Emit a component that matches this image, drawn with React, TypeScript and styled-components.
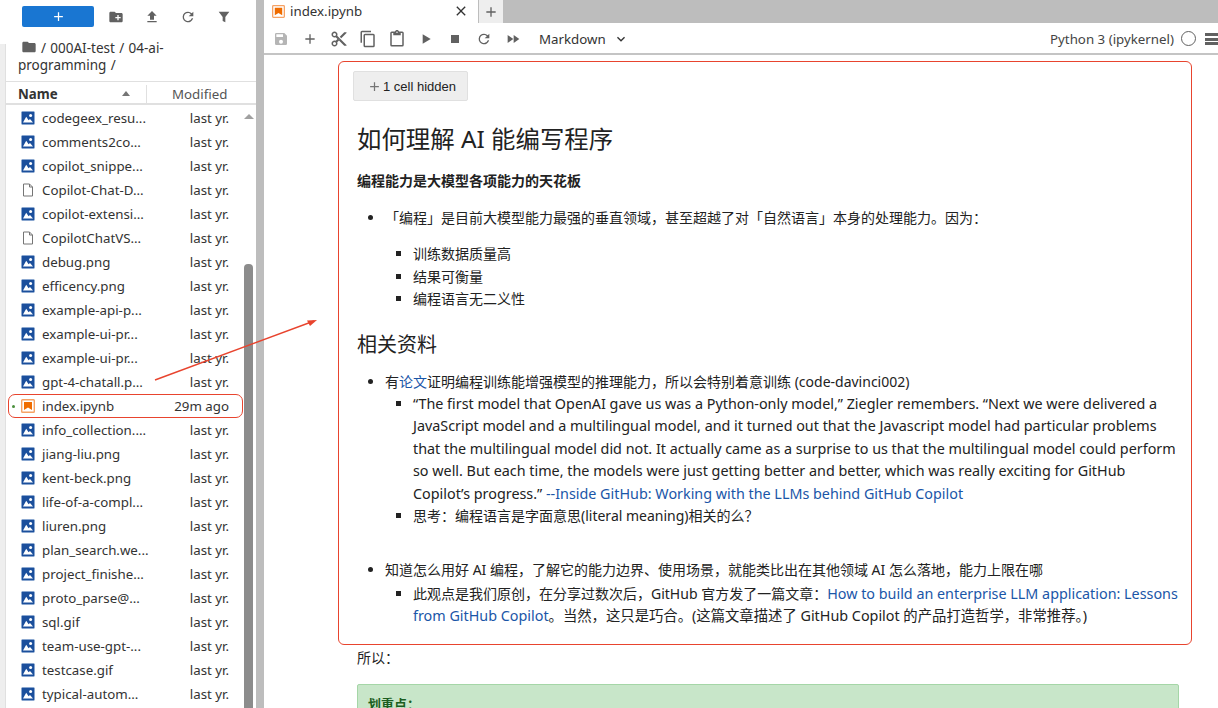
import React from "react";
import styled, { createGlobalStyle } from "styled-components";

const Global = createGlobalStyle`
  html, body { margin: 0; padding: 0; height: 708px; overflow: hidden; background: #fff; }
  #root { height: 708px; }
  * { box-sizing: border-box; }
`;
const FONT = `"Noto Sans", "Noto Sans CJK SC", sans-serif`;

const Page = styled.div`
  position: relative; display: flex; width: 1218px; height: 708px; overflow: hidden;
  font-family: ${FONT}; color: #2a2a2a; background: #fff;
`;
const Sidebar = styled.aside`
  width: 256px; flex: none; display: flex; flex-direction: column; height: 708px;
`;
const SideToolbar = styled.div`
  height: 39px; flex: none; display: flex; align-items: flex-start; padding: 6px 0 0 22px;
`;
const NewButton = styled.div`
  width: 72px; height: 21px; border-radius: 2px; background: #1976d2; display: flex;
  align-items: center; justify-content: center; color: #fff; margin-right: 4px;
`;
const SideTool = styled.div`
  width: 36px; height: 21px; display: flex; align-items: center; justify-content: center; color: #616161;
`;
const SideBody = styled.div`flex: 1; display: flex; min-height: 0;`;
const Strip = styled.div`width: 6px; flex: none; margin-top: 5px; background: #eee; border-right: 1px solid #e0e0e0;`;
const Panel = styled.div`flex: 1; min-width: 0; display: flex; flex-direction: column;`;
const Crumbs = styled.div`
  height: 42px; flex: none; padding: 0 0 0 12px; font-size: 13.5px; line-height: 17px; color: #333; word-spacing: 0.8px;
  svg { vertical-align: -2px; margin: 0 4px 0 3px; color: #616161; }
`;
const Header = styled.div`
  height: 24px; flex: none; display: flex; align-items: center; padding-top: 2px; border-top: 1px solid #e0e0e0;
  border-bottom: 2px solid #e0e0e0; font-size: 13.3px; color: #333;
`;
const NameHead = styled.div`
  width: 141px; flex: none; display: flex; align-items: center; justify-content: space-between;
  padding: 0 16px 0 12px; font-weight: 700; height: 18px; border-right: 1px solid #e0e0e0; color: #333;
`;
const SortUp = styled.span`
  width: 0; height: 0; border-left: 4.5px solid transparent; border-right: 4.5px solid transparent;
  border-bottom: 5px solid #757575;
`;
const ModHead = styled.div`flex: 1; padding-left: 25px; color: #555;`;
const ListArea = styled.div`flex: 1; display: flex; min-height: 0; padding-top: 1px;`;
const Rows = styled.div`width: 237px; flex: none; display: flex; flex-direction: column;`;
const Row = styled.div`
  position: relative; height: 24px; flex: none; display: flex; align-items: center;
  padding: 0 14px 0 15px; font-size: 13.3px; color: #333;
`;
const FileIcon = styled.svg`width: 14px; height: 14px; flex: none; margin-right: 7px;`;
const TabIcon = styled(FileIcon)`width: 13px; height: 13px; margin-right: 5px;`;
const FileName = styled.span`flex: 1; min-width: 0; white-space: nowrap;`;
const FileDate = styled.span`flex: none; white-space: nowrap;`;
const Ring = styled.div`
  position: absolute; left: 2px; right: 0; top: 0; height: 24px;
  border: 1px solid #e8442e; border-radius: 7px; pointer-events: none;
`;
const Dot = styled.span`
  position: absolute; left: 6px; top: 11px; width: 3px; height: 3px; border-radius: 50%; background: #4a8f3c;
`;
const Scroll = styled.div`flex: 1; position: relative; display: flex; flex-direction: column; align-items: center; padding-right: 2px;`;
const ScrollArrow = styled.span`
  width: 0; height: 0; margin-top: 8px; border-left: 5px solid transparent; border-right: 5px solid transparent;
  border-bottom: 5px solid #a0a0a0;
`;
const Thumb = styled.div`width: 9px; flex: 1; margin-top: 145px; background: #8c8c8c; border-radius: 4px 4px 0 0;`;
const Divider = styled.div`width: 8px; flex: none; background: #bdbdbd; height: 708px;`;

const Main = styled.main`flex: 1; min-width: 0; display: flex; flex-direction: column; height: 708px;`;
const TabBar = styled.div`height: 23px; flex: none; display: flex; background: #bdbdbd;`;
const Tab = styled.div`
  width: 214px; flex: none; background: #fff; display: flex; align-items: center; padding: 0 9px 1px 8px;
  font-size: 13.3px; color: #333;
  span { flex: 1; }
`;
const AddTab = styled.div`
  width: 25px; flex: none; background: #eee; border-left: 1px solid #bdbdbd; display: flex; align-items: center; justify-content: center; color: #616161;
`;
const Toolbar = styled.div`
  height: 32px; flex: none; display: flex; align-items: center; border-bottom: 2px solid #c4c4c4; padding: 1px 0 0 2px; color: #616161;
`;
const Tool = styled.div`
  width: 29px; height: 24px; flex: none; display: flex; align-items: center; justify-content: center;
  color: ${(p: { $muted?: boolean }) => (p.$muted ? "#b5b5b5" : "#616161")};
`;
const CellType = styled.div`
  display: flex; align-items: center; margin-left: 12px; font-size: 13.3px; color: #333; width: 90px; justify-content: space-between;
`;
const Spacer = styled.div`flex: 1;`;
const Kernel = styled.div`font-size: 13.3px; color: #444; white-space: nowrap; margin-right: 7px;`;
const KernelState = styled.span`
  width: 15px; height: 15px; border: 1.5px solid #616161; border-radius: 50%; flex: none; margin-right: 9px;
`;
const Menu = styled.span`
  width: 13px; height: 12px; flex: none;
  background: repeating-linear-gradient(#616161 0 3px, transparent 3px 4.5px);
`;
const Notebook = styled.div`flex: 1; min-height: 0; overflow: hidden; padding: 6px 26px 0 74px;`;
const RedBox = styled.section`
  height: 584px; border: 1px solid #e8442e; border-radius: 6px; padding: 9px 12px 0 18px;
`;
const Hidden = styled.div`
  width: 115px; height: 30px; margin-left: -4px; padding-left: 2px; background: #eee; border: 1px solid #e0e0e0; border-radius: 2px;
  display: flex; align-items: center; justify-content: center; gap: 1px; font-family: "Liberation Sans", "Noto Sans CJK SC", sans-serif;
  font-size: 13px; color: #222; svg { color: #757575; }
`;
const H1 = styled.h1`
  margin: 21px 0 0; font-size: 24.4px; line-height: 34px; font-weight: 400; color: #222;
`;
const Strong = styled.p`margin: 15px 0 0; font-size: 14px; line-height: 20px; font-weight: 700; color: #222;`;
const Outer = styled.ul`margin: 0; padding-left: 28px; font-size: 14px; color: #222;`;
const Inner = styled.ul`margin: 0; padding-left: 28px; list-style: square;`;
const Li = styled.li`line-height: 22.4px;`;
const H2 = styled.h2`margin: 19px 0 0; font-size: 20px; line-height: 30px; font-weight: 400; color: #222;`;
const Prose = styled.span`font-size: 14.35px; white-space: nowrap;`;
const A = styled.a`color: #1a56a8; text-decoration: none;`;
const After = styled.p`margin: 2px 0 0 19px; font-size: 14px; line-height: 22px; color: #222;`;
const Note = styled.div`
  margin: 15px 13px 0 19px; height: 80px; background: #c8e6c9; border: 1px solid #a5d6a7; border-radius: 2px;
  padding: 9px 10px; font-size: 13px; font-weight: 700; color: #1b5e20;
`;
const Overlay = styled.svg`position: absolute; left: 0; top: 0; width: 1218px; height: 708px; pointer-events: none;`;

const ImageIcon = () => (
  <FileIcon viewBox="0 0 14 14">
    <rect x="0.5" y="0.5" width="13" height="13" rx="1" fill="#1b4f9c" stroke="#8aa7d2" strokeWidth="0.6" />
    <circle cx="9.6" cy="4.6" r="1.5" fill="#fff" />
    <path d="M2 11.500 5.200 5.800 7.600 9.200 9 8l3 3.500z" fill="#fff" />
  </FileIcon>
);
const notebookArt = (
  <>
    <rect x="0.7" y="0.7" width="12.6" height="12.6" rx="0.8" fill="#fff" stroke="#f6a265" strokeWidth="1.4" />
    <path d="M3 3h8v8L7 8.600 3 11z" fill="#ef6c00" />
  </>
);
const NotebookIcon = () => <FileIcon viewBox="0 0 14 14">{notebookArt}</FileIcon>;
const DocIcon = () => (
  <FileIcon viewBox="0 0 14 14">
    <path d="M2.500 1h6L11.500 4v9h-9z M8.500 1v3h3" fill="none" stroke="#757575" strokeWidth="1" />
  </FileIcon>
);
const Ico = ({ d, size = 16 }: { d: string; size?: number }) => (
  <svg width={size} height={size} viewBox="0 0 24 24" fill="currentColor"><path d={d} /></svg>
);
const P = {
  plus: "M19 13h-6v6h-2v-6H5v-2h6V5h2v6h6z",
  folderPlus: "M20 6h-8l-2-2H4c-1.100 0-2 .9-2 2v12c0 1.100.9 2 2 2h16c1.100 0 2-.9 2-2V8c0-1.100-.9-2-2-2zm-1 8h-3v3h-2v-3h-3v-2h3V9h2v3h3v2z",
  upload: "M5 20h14v-2H5v2zm0-10h4v6h6v-6h4l-7-7-7 7z",
  refresh: "M17.650 6.350A7.950 7.950 0 0 0 12 4a8 8 0 1 0 7.730 10h-2.080A6 6 0 1 1 12 6c1.660 0 3.140.69 4.220 1.780L13 11h7V4l-2.350 2.350z",
  filter: "M4 4h16l-6 8v8l-4-2v-6z",
  folder: "M10 4H4c-1.100 0-2 .9-2 2v12c0 1.100.9 2 2 2h16c1.100 0 2-.9 2-2V8c0-1.100-.9-2-2-2h-8l-2-2z",
  save: "M17 3H5a2 2 0 0 0-2 2v14a2 2 0 0 0 2 2h14a2 2 0 0 0 2-2V7l-4-4zm-5 16a3 3 0 1 1 0-6 3 3 0 0 1 0 6zm3-10H5V5h10v4z",
  cut: "M9.640 7.640c.23-.5.36-1.050.36-1.640 0-2.210-1.790-4-4-4S2 3.790 2 6s1.790 4 4 4c.59 0 1.140-.13 1.640-.36L10 12l-2.360 2.360C7.140 14.130 6.590 14 6 14c-2.210 0-4 1.790-4 4s1.790 4 4 4 4-1.790 4-4c0-.59-.13-1.140-.36-1.640L12 14l7 7h3v-1L9.640 7.640zM6 8a2 2 0 1 1 0-4 2 2 0 0 1 0 4zm0 12a2 2 0 1 1 0-4 2 2 0 0 1 0 4zm6-7.500a.5.5 0 1 1 0-1 .5.5 0 0 1 0 1zM19 3l-6 6 2 2 7-7V3z",
  copy: "M16 1H4a2 2 0 0 0-2 2v14h2V3h12V1zm3 4H8a2 2 0 0 0-2 2v14a2 2 0 0 0 2 2h11a2 2 0 0 0 2-2V7a2 2 0 0 0-2-2zm0 16H8V7h11v14z",
  paste: "M19 2h-4.180C14.400.84 13.300 0 12 0S9.600.84 9.180 2H5a2 2 0 0 0-2 2v16a2 2 0 0 0 2 2h14a2 2 0 0 0 2-2V4a2 2 0 0 0-2-2zm-7 0a1 1 0 1 1 0 2 1 1 0 0 1 0-2zm7 18H5V4h2v3h10V4h2v16z",
  run: "M7 5v14l12-7z",
  stop: "M6 6h12v12H6z",
  ff: "M4 18l8.500-6L4 6v12zm9-12v12l8.500-6L13 6z",
  chevron: "M7.410 8.590 12 13.170l4.590-4.580L18 10l-6 6-6-6z",
  close: "M19 6.410 17.590 5 12 10.590 6.410 5 5 6.410 10.590 12 5 17.590 6.410 19 12 13.410 17.590 19 19 17.590 13.410 12z",
};

const files: [string, string, "img" | "doc" | "nb"][] = [
  ["codegeex_resu...", "last yr.", "img"],
  ["comments2co...", "last yr.", "img"],
  ["copilot_snippe...", "last yr.", "img"],
  ["Copilot-Chat-D...", "last yr.", "doc"],
  ["copilot-extensi...", "last yr.", "img"],
  ["CopilotChatVS...", "last yr.", "doc"],
  ["debug.png", "last yr.", "img"],
  ["efficency.png", "last yr.", "img"],
  ["example-api-p...", "last yr.", "img"],
  ["example-ui-pr...", "last yr.", "img"],
  ["example-ui-pr...", "last yr.", "img"],
  ["gpt-4-chatall.p...", "last yr.", "img"],
  ["index.ipynb", "29m ago", "nb"],
  ["info_collection....", "last yr.", "img"],
  ["jiang-liu.png", "last yr.", "img"],
  ["kent-beck.png", "last yr.", "img"],
  ["life-of-a-compl...", "last yr.", "img"],
  ["liuren.png", "last yr.", "img"],
  ["plan_search.we...", "last yr.", "img"],
  ["project_finishe...", "last yr.", "img"],
  ["proto_parse@...", "last yr.", "img"],
  ["sql.gif", "last yr.", "img"],
  ["team-use-gpt-...", "last yr.", "img"],
  ["testcase.gif", "last yr.", "img"],
  ["typical-autom...", "last yr.", "img"],
];

export default function App() {
  return (
    <Page>
      <Global />
      <Sidebar>
        <SideToolbar>
          <NewButton><Ico d={P.plus} size={15} /></NewButton>
          <SideTool><Ico d={P.folderPlus} /></SideTool>
          <SideTool><Ico d={P.upload} /></SideTool>
          <SideTool><Ico d={P.refresh} /></SideTool>
          <SideTool><Ico d={P.filter} /></SideTool>
        </SideToolbar>
        <SideBody>
          <Strip />
          <Panel>
            <Crumbs>
              <Ico d={P.folder} size={16} />/ 000AI-test / 04-ai-<br />programming /
            </Crumbs>
            <Header>
              <NameHead>Name<SortUp /></NameHead>
              <ModHead>Modified</ModHead>
            </Header>
            <ListArea>
              <Rows>
                {files.map(([name, date, kind], i) => (
                  <Row key={i}>
                    {kind === "nb" && <Ring />}
                    {kind === "nb" && <Dot />}
                    {kind === "img" ? <ImageIcon /> : kind === "doc" ? <DocIcon /> : <NotebookIcon />}
                    <FileName>{name}</FileName>
                    <FileDate>{date}</FileDate>
                  </Row>
                ))}
              </Rows>
              <Scroll>
                <ScrollArrow />
                <Thumb />
              </Scroll>
            </ListArea>
          </Panel>
        </SideBody>
      </Sidebar>
      <Divider />
      <Main>
        <TabBar>
          <Tab>
            <TabIcon viewBox="0 0 14 14">{notebookArt}</TabIcon>
            <span>index.ipynb</span>
            <Ico d={P.close} size={16} />
          </Tab>
          <AddTab><Ico d={P.plus} size={16} /></AddTab>
        </TabBar>
        <Toolbar>
          <Tool $muted><Ico d={P.save} /></Tool>
          <Tool><Ico d={P.plus} /></Tool>
          <Tool><Ico d={P.cut} size={18} /></Tool>
          <Tool><Ico d={P.copy} size={18} /></Tool>
          <Tool><Ico d={P.paste} size={18} /></Tool>
          <Tool><Ico d={P.run} /></Tool>
          <Tool><Ico d={P.stop} /></Tool>
          <Tool><Ico d={P.refresh} /></Tool>
          <Tool><Ico d={P.ff} /></Tool>
          <CellType>Markdown<Ico d={P.chevron} size={16} /></CellType>
          <Spacer />
          <Kernel>Python 3 (ipykernel)</Kernel>
          <KernelState />
          <Menu />
        </Toolbar>
        <Notebook>
          <RedBox>
            <Hidden><Ico d={P.plus} size={15} />1 cell hidden</Hidden>
            <H1>如何理解 AI 能编写程序</H1>
            <Strong>编程能力是大模型各项能力的天花板</Strong>
            <Outer style={{ marginTop: 16 }}>
              <Li>「编程」是目前大模型能力最强的垂直领域，甚至超越了对「自然语言」本身的处理能力。因为：
                <Inner style={{ marginTop: 14 }}>
                  <Li>训练数据质量高</Li>
                  <Li>结果可衡量</Li>
                  <Li>编程语言无二义性</Li>
                </Inner>
              </Li>
            </Outer>
            <H2>相关资料</H2>
            <Outer style={{ marginTop: 11 }}>
              <Li>有<A>论文</A>证明编程训练能增强模型的推理能力，所以会特别着意训练 (code-davinci002)
                <Inner>
                  <Li><Prose>“The first model that OpenAI gave us was a Python-only model,” Ziegler remembers. “Next we were delivered a<br />
                    JavaScript model and a multilingual model, and it turned out that the Javascript model had particular problems<br />
                    that the multilingual model did not. It actually came as a surprise to us that the multilingual model could perform<br />
                    so well. But each time, the models were just getting better and better, which was really exciting for GitHub<br />
                    Copilot’s progress.” <A>--Inside GitHub: Working with the LLMs behind GitHub Copilot</A></Prose></Li>
                  <Li>思考：编程语言是字面意思(literal meaning)相关的么？</Li>
                </Inner>
              </Li>
              <Li style={{ marginTop: 32 }}>知道怎么用好 AI 编程，了解它的能力边界、使用场景，就能类比出在其他领域 AI 怎么落地，能力上限在哪
                <Inner style={{ marginTop: 1 }}>
                  <Li>此观点是我们原创，在分享过数次后，GitHub 官方发了一篇文章：<Prose><A>How to build an enterprise LLM application: Lessons</A><br />
                    <A>from GitHub Copilot</A>。当然，这只是巧合。(这篇文章描述了 GitHub Copilot 的产品打造哲学，非常推荐。)</Prose></Li>
                </Inner>
              </Li>
            </Outer>
          </RedBox>
          <After>所以：</After>
          <Note>划重点：</Note>
        </Notebook>
      </Main>
      <Overlay viewBox="0 0 1218 708">
        <path d="M155 380 L314 321" stroke="#e8442e" strokeWidth="1.500" fill="none" />
        <path d="M317 320 L307 320.500 L310 326 z" fill="#e8442e" />
      </Overlay>
    </Page>
  );
}
